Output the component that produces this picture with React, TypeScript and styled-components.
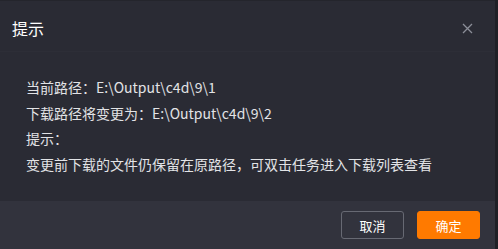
import React from "react";
import styled, { createGlobalStyle } from "styled-components";

const GlobalStyle = createGlobalStyle`
  html, body {
    margin: 0;
    padding: 0;
    background: #1f2026;
  }
  body {
    font-family: "Noto Sans CJK SC", "Microsoft YaHei", sans-serif;
  }
`;

const Dialog = styled.div`
  width: 495px;
  height: 249px;
  display: flex;
  flex-direction: column;
  background: #2a2b34;
  border-top: 1px solid #24252c;
  box-sizing: border-box;
`;

const Header = styled.div`
  height: 51px;
  display: flex;
  align-items: center;
  justify-content: space-between;
  padding: 4px 20px 0 12px;
  box-sizing: border-box;
  border-bottom: 1px solid #2d2e37;
`;

const Title = styled.span`
  font-size: 16px;
  color: #ffffff;
`;

const Close = styled.button`
  width: 16px;
  height: 16px;
  padding: 0;
  border: none;
  background: transparent;
  display: flex;
  align-items: center;
  justify-content: center;
  cursor: pointer;
`;

const Body = styled.div`
  flex: 1;
  padding: 23px 26px 0;
  font-size: 14px;
  line-height: 25.5px;
  color: #e2e3e6;
`;

const Footer = styled.div`
  height: 48px;
  display: flex;
  align-items: center;
  justify-content: flex-end;
  gap: 13px;
  padding: 0 15px 0 0;
  background: #32333d;
`;

const Button = styled.button<{ $primary?: boolean }>`
  width: 63px;
  height: 28px;
  border-radius: 3px;
  font-family: inherit;
  font-size: 13px;
  color: #ffffff;
  cursor: pointer;
  border: 1px solid ${(p) => (p.$primary ? "#ff7a00" : "#676973")};
  background: ${(p) => (p.$primary ? "#ff7a00" : "transparent")};
`;

export default function App() {
  return (
    <>
      <GlobalStyle />
      <Dialog>
        <Header>
          <Title>提示</Title>
          <Close aria-label="关闭">
            <svg width="11" height="11" viewBox="0 0 11 11">
              <path d="M1 1 L10 10 M10 1 L1 10" stroke="#8b8e98" strokeWidth="1.3" />
            </svg>
          </Close>
        </Header>
        <Body>
          <div>当前路径：E:\Output\c4d\9\1</div>
          <div>下载路径将变更为：E:\Output\c4d\9\2</div>
          <div>提示：</div>
          <div>变更前下载的文件仍保留在原路径，可双击任务进入下载列表查看</div>
        </Body>
        <Footer>
          <Button>取消</Button>
          <Button $primary>确定</Button>
        </Footer>
      </Dialog>
    </>
  );
}
